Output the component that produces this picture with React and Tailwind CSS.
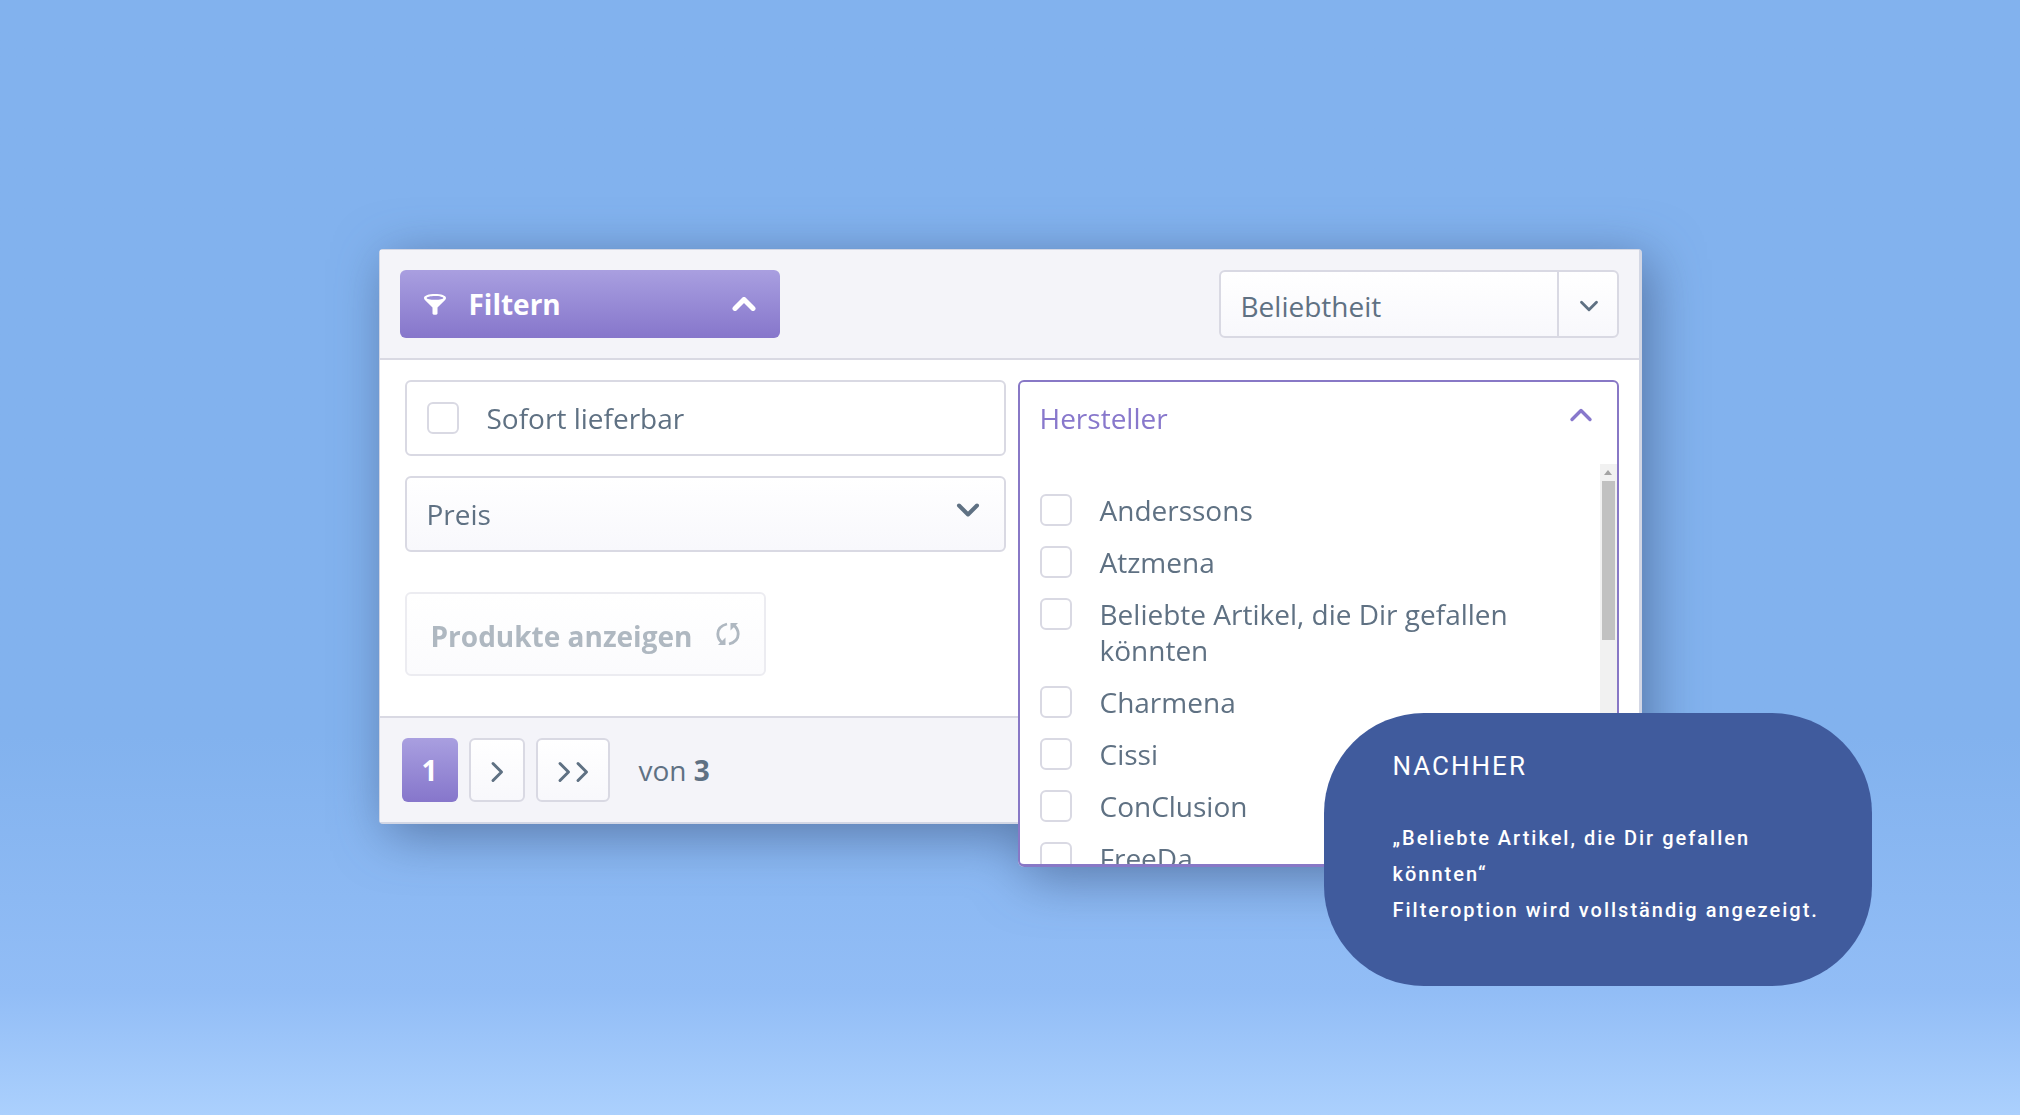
import { useState } from "react";

const brands = [
    "Anderssons",
    "Atzmena",
    "Beliebte Artikel, die Dir gefallen könnten",
    "Charmena",
    "Cissi",
    "ConClusion",
    "FreeDa",
];

const boxClass =
    "h-8 w-8 shrink-0 appearance-none rounded-md border-2 border-[#d9d9e3] bg-white checked:bg-[#8878cc]";

function Chevron({ className, strokeWidth = 3.4 }) {
    return (
        <svg viewBox="0 0 24 14" className={className} fill="none" stroke="currentColor" strokeWidth={strokeWidth} strokeLinecap="round" strokeLinejoin="round" aria-hidden="true">
            <path d="M3 11.500 L12 2.500 L21 11.500" />
        </svg>
    );
}

function Arrow() {
    return (
        <svg viewBox="0 0 14 22" className="h-[22px] w-[14px]" fill="none" stroke="currentColor" strokeWidth="3" strokeLinecap="round" strokeLinejoin="round" aria-hidden="true">
            <path d="M3 2.500 L11.500 11 L3 19.500" />
        </svg>
    );
}

function Funnel() {
    return (
        <svg viewBox="0 0 22 21" className="h-[21px] w-[22px]" aria-hidden="true">
            <path
                fill="currentColor"
                fillRule="evenodd"
                d="M11 0C17 0 22 1.500 22 4c0 .8-.3 1.400-.9 2.100L13.500 13.500V19.500c0 .8-1 1.300-2.500 1.300s-2.500-.5-2.500-1.300V13.500L.9 6.100C.3 5.400 0 4.800 0 4 0 1.500 5 0 11 0ZM11 1.900C6.200 1.900 2.600 2.900 2.600 3.900S6.200 5.700 11 5.700s8.400-.8 8.400-1.800S15.800 1.900 11 1.900Z"
            />
        </svg>
    );
}

function Reload() {
    return (
        <svg viewBox="0 0 24 24" className="h-6 w-6" fill="none" stroke="currentColor" strokeWidth="2.8" aria-hidden="true">
            <path d="M11 2C5 3.500 1.800 7 1.800 12c0 4 2 7 5 9" />
            <path d="M13 22C19 20.500 22.200 17 22.200 12c0-4-2-7-5-9" />
            <path d="M2 23h7.500v-7.500Z" fill="currentColor" stroke="none" />
            <path d="M22 1h-7.500v7.500Z" fill="currentColor" stroke="none" />
        </svg>
    );
}

export default function App() {
    const [open, setOpen] = useState(true);

    return (
        <div className="min-h-screen overflow-hidden bg-linear-to-b from-[#82b2ee] from-66% via-[#92bdf6] via-89% to-[#abd0fd] px-6 pt-[249px] pb-32 font-['Open_Sans',sans-serif] text-[28px] leading-9 text-[#5f7183]">
            <main className="relative mx-auto w-full max-w-[1263px]">
                <div className="drop-shadow-[8px_10px_26px_rgba(50,70,110,0.55)]">
                    <section className="rounded-sm border border-r-3 border-b-2 border-[#d3d7e5] bg-white">

                        {/* Toolbar */}
                        <header className="flex items-center justify-between border-b-2 border-[#d9d9e3] bg-[#f4f4f9] p-5">
                            <button
                                className="flex h-17 w-[380px] items-center rounded-md bg-linear-to-b from-[#a99fe0] to-[#8676cb] px-6 font-bold text-white"
                            >
                                <Funnel />
                                <span className="ml-[23px]">Filtern</span>
                                <Chevron className="ml-auto h-[14px] w-6" strokeWidth={5} />
                            </button>

                            <div className="relative">
                                <select
                                    aria-label="Sortierung"
                                    className="h-17 w-[400px] appearance-none rounded-md border-2 border-[#d9d9e3] bg-linear-to-b from-white to-[#f8f8fc] pt-1 pl-5"
                                >
                                    <option>Beliebtheit</option>
                                </select>
                                <span className="pointer-events-none absolute inset-y-0 right-0 flex w-[62px] items-center justify-center border-l-2 border-[#d9d9e3] pt-1">
                                    <Chevron className="h-3 w-5 rotate-180" />
                                </span>
                            </div>
                        </header>

                        {/* Filter */}
                        <div className="relative grid grid-cols-2 gap-x-3 pt-5 pr-5 pb-10 pl-[25px]">
                            <div>
                                <label className="flex h-[76px] items-center rounded-md border-2 border-[#d9d9e3] px-5">
                                    <input type="checkbox" className={boxClass} />
                                    <span className="ml-7">Sofort lieferbar</span>
                                </label>

                                <button className="mt-5 flex h-[76px] w-full items-center justify-between rounded-md border-2 border-[#d9d9e3] bg-linear-to-b from-white to-[#f8f8fc] px-5">
                                    Preis
                                    <Chevron className="mr-1 mb-2 h-[14px] w-6 rotate-180" strokeWidth={4} />
                                </button>

                                <button className="mt-10 flex h-[84px] items-center rounded-md border-2 border-[#ececf1] bg-linear-to-b from-white to-[#fbfbfd] px-6 pt-1 font-bold text-[#afb8c1]">
                                    Produkte anzeigen
                                    <span className="mb-1 ml-6"><Reload /></span>
                                </button>
                            </div>

                            <div className="relative">
                                <fieldset className="absolute inset-x-0 top-0 z-10 h-[487px] overflow-hidden rounded-md border-2 border-b-3 border-[#8878c6] bg-white">
                                    <button
                                        className="flex h-[82px] w-full items-start justify-between px-5 pt-[18px] text-[#8878cc]"
                                        onClick={() => setOpen(!open)}
                                    >
                                        Hersteller
                                        <Chevron className="mt-2 mr-1 h-[14px] w-6" />
                                    </button>
                                    {open && (
                                        <div className="flex h-[400px]">
                                            <ul className="flex-1 space-y-4 overflow-hidden pt-7 pl-5">
                                                {brands.map((brand) => (
                                                    <li key={brand}>
                                                        <label className="flex items-start gap-7">
                                                            <input type="checkbox" className={`mt-0.5 ${boxClass}`} />
                                                            <span className="max-w-[440px]">{brand}</span>
                                                        </label>
                                                    </li>
                                                ))}
                                            </ul>
                                            <div className="flex w-[17px] flex-col items-center bg-[#f1f1f1]">
                                                <svg viewBox="0 0 8 5" className="my-[6px] h-[5px] w-2" aria-hidden="true">
                                                    <path d="M0 5 L4 0 L8 5Z" fill="#a3a3a3" />
                                                </svg>
                                                <div className="h-[159px] w-[13px] bg-[#c1c1c1]" />
                                            </div>
                                        </div>
                                    )}
                                </fieldset>
                            </div>
                        </div>

                        {/* Pagination */}
                        <footer className="border-t-2 border-[#d9d9e3] bg-[#f4f4f9] px-[22px] py-5">
                            <nav className="flex items-center">
                                <button className="h-16 w-14 rounded-md bg-linear-to-b from-[#a99fe0] to-[#8676cb] font-bold text-white">1</button>
                                <button aria-label="Nächste Seite" className="ml-[11px] flex h-16 w-14 items-center justify-center rounded-md border-2 border-[#d9d9e3] bg-linear-to-b from-white to-[#f8f8fc] pt-1">
                                    <Arrow />
                                </button>
                                <button aria-label="Letzte Seite" className="ml-[11px] flex h-16 w-[74px] items-center justify-center gap-1 rounded-md border-2 border-[#d9d9e3] bg-linear-to-b from-white to-[#f8f8fc] pt-1">
                                    <Arrow />
                                    <Arrow />
                                </button>
                                <p className="ml-[29px]">von <b>3</b></p>
                            </nav>
                        </footer>
                    </section>
                </div>

                {/* Hinweis */}
                <aside className="absolute -right-[230px] -bottom-[162px] h-[273px] w-[548px] rounded-[100px] bg-[#405b9d] pt-[35px] pl-[69px] font-[Roboto,sans-serif] text-xl leading-9 font-medium tracking-widest text-white">
                    <h2 className="text-[26px] font-normal">NACHHER</h2>
                    <p className="mt-9">
                        „Beliebte Artikel, die Dir gefallen
                        <br />
                        könnten“
                        <br />
                        Filteroption wird vollständig angezeigt.
                    </p>
                </aside>
            </main>
        </div>
    );
}
